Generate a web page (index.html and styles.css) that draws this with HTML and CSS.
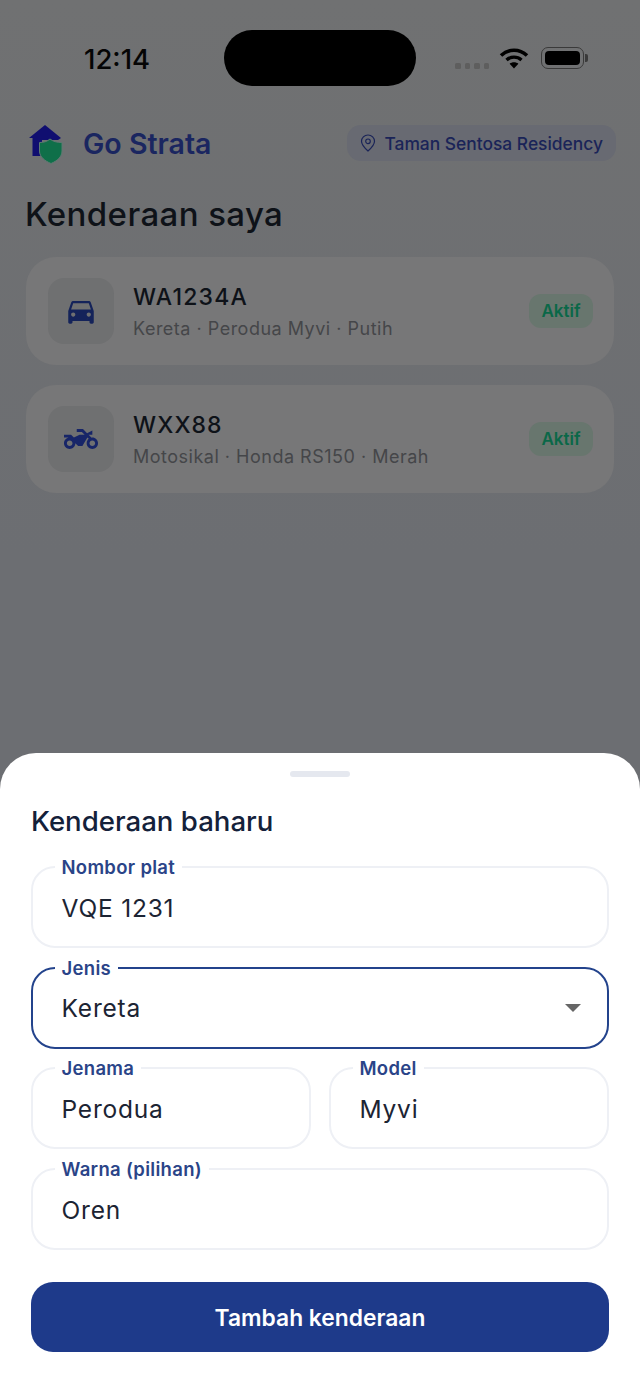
FILE: index.html
```html
<!DOCTYPE html>
<html lang="ms">
<head>
<meta charset="utf-8">
<title>Go Strata</title>
<link rel="stylesheet" href="styles.css">
</head>
<body>
<div class="phone">
  <div class="status">
    <span class="time">12:14</span>
    <span class="island"></span>
    <span class="dots"><i></i><i></i><i></i><i></i></span>
    <svg class="wifi" viewBox="0 0 30 22" width="30" height="22"><path d="M2 8.5C9.5 1.5 20.5 1.500 28 8.500" fill="none" stroke="#000" stroke-width="3.600"/><path d="M7.500 13C11.800 9.200 18.200 9.200 22.500 13" fill="none" stroke="#000" stroke-width="3.400"/><path d="M15 21.500 10.600 16.800C13 14.800 17 14.800 19.400 16.800Z" fill="#000"/></svg>
    <span class="battery"><span class="battery-fill"></span></span>
    <span class="battery-nub"></span>
  </div>

  <header class="top">
    <div class="brand">
      <svg class="logo" viewBox="0 0 36 42" width="36" height="42"><path d="M17 2 1 15H4.500V33H14V17H30L33 15Z" fill="#100e70"/><path d="M22 16C25 18.500 29 19.500 34 19.500V28C34 34 29 38 23 40.500 17 38 11.500 34 11.500 28V19.500C16 19.500 19 18.500 22 16Z" fill="#0f6f49" stroke="#5f7a72" stroke-width="1"/></svg>
      <span class="brand-name">Go Strata</span>
    </div>
    <div class="pill">
      <svg class="pin" viewBox="0 0 16 18" width="16" height="18"><path d="M8 1C4.300 1 1.500 3.800 1.500 7.300 1.500 11.200 5.500 14.800 8 17 10.500 14.800 14.500 11.200 14.500 7.300 14.500 3.800 11.700 1 8 1Z" fill="none" stroke="#1a2458" stroke-width="1.200"/><circle cx="8" cy="7.300" r="2.300" fill="none" stroke="#1a2458" stroke-width="1.200"/></svg>
      <span>Taman Sentosa Residency</span>
    </div>
  </header>

  <h1 class="page-title">Kenderaan saya</h1>

  <section class="list">
    <article class="card">
      <div class="thumb">
        <svg viewBox="0 0 24 24" width="34" height="34"><path fill="#14235a" d="M18.920 6.010C18.720 5.420 18.160 5 17.500 5h-11c-.66 0-1.210.42-1.420 1.010L3 12v8c0 .55.45 1 1 1h1c.55 0 1-.45 1-1v-1h12v1c0 .55.45 1 1 1h1c.55 0 1-.45 1-1v-8l-2.080-5.990zM6.500 16c-.83 0-1.500-.67-1.500-1.500S5.670 13 6.500 13s1.500.67 1.500 1.500S7.330 16 6.500 16zm11 0c-.83 0-1.500-.67-1.500-1.500s.67-1.500 1.500-1.500 1.500.67 1.500 1.500-.67 1.500-1.500 1.500zM5 11l1.500-4.500h11L19 11H5z"/></svg>
      </div>
      <div class="info">
        <div class="plate">WA1234A</div>
        <div class="meta">Kereta · Perodua Myvi · Putih</div>
      </div>
      <span class="badge">Aktif</span>
    </article>
    <article class="card">
      <div class="thumb">
        <svg viewBox="0 0 24 24" width="34" height="34"><path fill="#172568" d="M20 11c-.18 0-.36.03-.53.05L17.410 9H20V6l-3.720 1.860L13.410 5H9v2h3.590l2 2H11l-4 2L5 9H0v2h4c-2.210 0-4 1.790-4 4s1.790 4 4 4 4-1.790 4-4l2 2h3l3.490-6.100 1.010 1.010c-.91.73-1.500 1.840-1.500 3.090 0 2.210 1.790 4 4 4s4-1.790 4-4-1.790-4-4-4zM4 17c-1.100 0-2-.9-2-2s.9-2 2-2 2 .9 2 2-.9 2-2 2zm16 0c-1.100 0-2-.9-2-2s.9-2 2-2 2 .9 2 2-.9 2-2 2z"/></svg>
      </div>
      <div class="info">
        <div class="plate">WXX88</div>
        <div class="meta">Motosikal · Honda RS150 · Merah</div>
      </div>
      <span class="badge">Aktif</span>
    </article>
  </section>

  <section class="sheet">
    <div class="handle"></div>
    <h2 class="sheet-title">Kenderaan baharu</h2>
    <div class="form">
      <div class="field"><label class="field-label">Nombor plat</label><span class="value">VQE 1231</span></div>
      <div class="field focused"><label class="field-label">Jenis</label><span class="value">Kereta</span><span class="caret"></span></div>
      <div class="pair">
        <div class="field"><label class="field-label">Jenama</label><span class="value">Perodua</span></div>
        <div class="field"><label class="field-label">Model</label><span class="value">Myvi</span></div>
      </div>
      <div class="field"><label class="field-label">Warna (pilihan)</label><span class="value">Oren</span></div>
    </div>
    <button class="submit" type="button">Tambah kenderaan</button>
  </section>
</div>
</body>
</html>
```
FILE: styles.css
```css
* { box-sizing: border-box; }
html, body { margin: 0; padding: 0; }
body { font-family: Inter, "Liberation Sans", sans-serif; background: #6e7073; }

.phone {
  position: relative;
  width: 640px;
  height: 1390px;
  overflow: hidden;
  background: linear-gradient(#707172, #6c6e72 40%);
}

/* status bar */
.status { display: flex; align-items: flex-start; height: 125px; padding: 30px 0 0 84px; }
.time { width: 140px; margin-top: 12px; font-size: 27.500px; line-height: 34px; font-weight: 500; color: #050505; }
.island { width: 192px; height: 56px; border-radius: 28px; background: #000; }
.dots { display: flex; gap: 4px; margin: 33px 0 0 39px; }
.dots i { width: 5.500px; height: 5.500px; border-radius: 1.500px; background: #5e5e5e; }
.wifi { margin: 17px 0 0 10px; }
.battery { display: block; width: 43px; height: 22px; margin: 17px 0 0 12px; padding: 3px; border: 1.500px solid #3a3a3a; border-radius: 7px; }
.battery-fill { display: block; height: 100%; border-radius: 4px; background: #000; }
.battery-nub { width: 2.500px; height: 8px; margin: 24px 0 0 1px; border-radius: 0 2px 2px 0; background: #3a3a3a; }

/* header */
.top { display: flex; align-items: center; justify-content: space-between; height: 36px; padding: 0 24px 0 28px; }
.brand { display: flex; align-items: center; gap: 19px; }
.logo { margin-top: 2px; }
.brand-name { font-size: 28.500px; font-weight: 600; color: #1a2660; }
.pill { display: flex; align-items: center; gap: 8px; height: 36px; padding: 0 13px; border-radius: 14px; background: #686a72; color: #1a2458; font-size: 17.400px; font-weight: 500; }

.page-title { margin: 31px 0 0 25px; font-size: 33px; line-height: 44px; font-weight: 500; letter-spacing: .4px; color: #0e1218; }

/* vehicle cards */
.list { display: flex; flex-direction: column; gap: 20px; margin: 21px 26px 0; }
.card { display: flex; align-items: center; height: 108px; padding: 0 21px 0 22px; border-radius: 30px; background: #777778; }
.thumb { display: flex; align-items: center; justify-content: center; width: 66px; height: 66px; border-radius: 16px; background: #6f7071; }
.info { flex: 1; margin-left: 19px; padding-top: 2px; }
.plate { font-size: 23px; line-height: 28px; font-weight: 500; letter-spacing: 1.200px; color: #0e1218; }
.meta { margin-top: 6px; font-size: 18px; line-height: 24px; letter-spacing: .5px; color: #454649; }
.badge { display: flex; align-items: center; justify-content: center; width: 64px; height: 34px; border-radius: 12px; background: #68766e; color: #0a6848; font-size: 17px; font-weight: 600; }

/* bottom sheet */
.sheet {
  position: absolute;
  left: 0;
  right: 0;
  bottom: 0;
  height: 637px;
  padding: 18px 31px 0;
  border-radius: 36px 36px 0 0;
  background: #fff;
}
.handle { width: 60px; height: 6px; margin: 0 auto; border-radius: 3px; background: #e5e8ef; }
.sheet-title { margin: 22px 0 0; font-size: 27.600px; line-height: 44px; font-weight: 500; color: #14213a; }

.form { display: flex; flex-direction: column; gap: 18.700px; margin-top: 23px; }
.pair { display: grid; grid-template-columns: 1fr 1fr; gap: 18px; }
.field {
  position: relative;
  display: flex;
  align-items: center;
  justify-content: space-between;
  height: 82px;
  padding: 1px 26px 0 28.500px;
  border: 2px solid #eef0f5;
  border-radius: 24px;
  background: #fff;
}
.field.focused { border-color: #23438c; }
.field-label {
  position: absolute;
  top: -11px;
  left: 21.500px;
  padding: 0 7px;
  background: #fff;
  font-size: 18.500px;
  line-height: 20px;
  font-weight: 600;
  letter-spacing: .3px;
  color: #2a4488;
}
.value { font-size: 24.500px; line-height: 32px; letter-spacing: .8px; color: #1c2433; }
.caret { width: 0; height: 0; border-left: 8px solid transparent; border-right: 8px solid transparent; border-top: 8px solid #666; }

.submit {
  display: block;
  width: 100%;
  height: 70px;
  margin-top: 32px;
  border: 0;
  border-radius: 22px;
  background: #1e3a8a;
  color: #fff;
  font-family: inherit;
  font-size: 22.800px;
  font-weight: 600;
}
```
